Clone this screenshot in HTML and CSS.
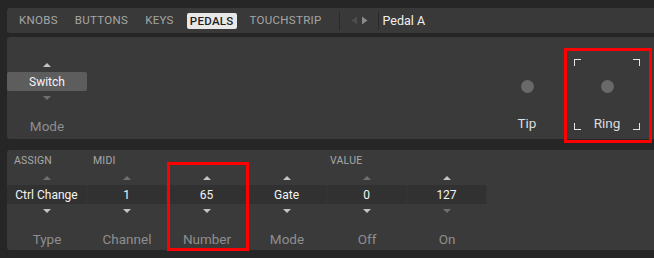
FILE: index.html
```html
<!DOCTYPE html>
<html>
<head>
<meta charset="utf-8">
<link rel="stylesheet" href="styles.css">
</head>
<body>
<div class="app">
  <div class="tabbar">
    <span class="tab">KNOBS</span>
    <span class="tab">BUTTONS</span>
    <span class="tab">KEYS</span>
    <span class="tab active">PEDALS</span>
    <span class="tab">TOUCHSTRIP</span>
    <span class="sep"></span>
    <span class="nav">
      <svg width="7" height="9" viewBox="0 0 7 9"><path d="M6 0.5 L0.5 4.5 L6 8.5 Z" fill="#4d4d4d"/></svg>
      <svg width="7" height="9" viewBox="0 0 7 9"><path d="M1 0.5 L6.5 4.5 L1 8.5 Z" fill="#8a8a8a"/></svg>
    </span>
    <span class="sep"></span>
    <span class="title">Pedal A</span>
  </div>

  <div class="panel top">
    <div class="col">
      <span class="arr up bright"></span>
      <div class="box sel">Switch</div>
      <span class="arr down dim"></span>
      <div class="label">Mode</div>
    </div>
    <div class="spacer"></div>
    <div class="col">
      <span class="dot"></span>
      <div class="label light">Tip</div>
    </div>
    <div class="col ring">
      <span class="dot"></span>
      <div class="label light">Ring</div>
      <span class="corner tl"></span><span class="corner tr"></span>
      <span class="corner bl"></span><span class="corner br"></span>
    </div>
    <div class="hl hl-ring"></div>
  </div>

  <div class="panel bottom">
    <div class="heads">
      <span class="head h-assign">ASSIGN</span>
      <span class="head h-midi">MIDI</span>
      <span class="head"></span>
      <span class="head"></span>
      <span class="head h-value">VALUE</span>
      <span class="head"></span>
    </div>
    <div class="cols">
      <div class="col">
        <span class="arr up dim"></span>
        <div class="box val">Ctrl Change</div>
        <span class="arr down bright"></span>
        <div class="label">Type</div>
      </div>
      <div class="col">
        <span class="arr up dim"></span>
        <div class="box val">1</div>
        <span class="arr down bright"></span>
        <div class="label">Channel</div>
      </div>
      <div class="col">
        <span class="arr up bright"></span>
        <div class="box val">65</div>
        <span class="arr down bright"></span>
        <div class="label">Number</div>
      </div>
      <div class="col">
        <span class="arr up bright"></span>
        <div class="box val">Gate</div>
        <span class="arr down bright"></span>
        <div class="label">Mode</div>
      </div>
      <div class="col">
        <span class="arr up dim"></span>
        <div class="box val">0</div>
        <span class="arr down bright"></span>
        <div class="label">Off</div>
      </div>
      <div class="col">
        <span class="arr up bright"></span>
        <div class="box val">127</div>
        <span class="arr down dim"></span>
        <div class="label">On</div>
      </div>
    </div>
    <div class="hl hl-number"></div>
  </div>
</div>
</body>
</html>
```

FILE: styles.css
```css
* { box-sizing: border-box; }
html, body { margin: 0; padding: 0; }
body {
  background: #262626;
  width: 654px;
  height: 258px;
  overflow: hidden;
  font-family: Roboto, "Liberation Sans", Arial, sans-serif;
}
.app {
  padding: 8px 0 0 7px;
}
.tabbar {
  height: 25px;
  background: #393939;
  border-radius: 3px 0 0 3px;
  display: flex;
  align-items: center;
  padding-left: 12px;
}
.tab {
  font-size: 11.5px;
  color: #a6a6a6;
  margin-right: 17px;
  letter-spacing: 0.3px;
  line-height: 15px;
}
.tab.active {
  background: #e8e8e8;
  color: #1e1e1e;
  padding: 1px 3px 0;
  margin-left: -4px;
  margin-right: 13px;
  border-radius: 2px;
  font-weight: 500;
}
.sep {
  width: 1px;
  height: 19px;
  background: #2a2a2a;
}
.nav {
  display: flex;
  gap: 3px;
  padding: 0 10px 0 11px;
}
.nav svg { display: block; }
.title {
  font-size: 12.5px;
  color: #f0f0f0;
  margin-left: 4px;
}

.panel {
  position: relative;
  background: #3a3a3a;
  border-radius: 3px 0 0 3px;
}
.panel.top {
  margin-top: 4px;
  height: 102px;
  display: flex;
  padding-right: 7px;
}
.panel.bottom {
  margin-top: 11px;
  height: 100px;
}
.spacer { flex: 1; }
.col {
  width: 80px;
  display: flex;
  flex-direction: column;
  align-items: center;
  position: relative;
}
.arr {
  width: 0;
  height: 0;
  border-left: 4px solid transparent;
  border-right: 4px solid transparent;
}
.arr.up {
  margin-top: 26px;
  border-bottom: 4px solid #888;
}
.arr.down {
  margin-top: 5px;
  border-top: 4px solid #888;
}
.arr.up.bright { border-bottom-color: #c4c4c4; }
.arr.up.dim { border-bottom-color: #6e6e6e; }
.arr.down.bright { border-top-color: #c4c4c4; }
.arr.down.dim { border-top-color: #6e6e6e; }
.box {
  margin-top: 5px;
  width: 80px;
  height: 19px;
  display: flex;
  align-items: center;
  justify-content: center;
  font-size: 12px;
  color: #f4f4f4;
}
.box.sel {
  background: #5d5d5d;
  border-radius: 2px;
}
.box.val {
  background: #313131;
  border-right: 1px solid #363636;
  border-radius: 2px;
}
.label {
  margin-top: 18px;
  font-size: 13.5px;
  color: #8e8e8e;
  line-height: 16px;
}
.label.light { color: #dcdcdc; }
.dot {
  margin-top: 43px;
  width: 13px;
  height: 13px;
  border-radius: 50%;
  background: #696969;
}
.col .dot + .label { margin-top: 22px; }

.corner {
  position: absolute;
  width: 7px;
  height: 7px;
  border-color: #e6e6e6;
  border-style: solid;
  border-width: 0;
}
.corner.tl { left: 7px; top: 22px; border-left-width: 1.5px; border-top-width: 1.5px; }
.corner.tr { right: 7px; top: 22px; border-right-width: 1.5px; border-top-width: 1.5px; }
.corner.bl { left: 7px; top: 86px; border-left-width: 1.5px; border-bottom-width: 1.5px; }
.corner.br { right: 7px; top: 86px; border-right-width: 1.5px; border-bottom-width: 1.5px; }

.hl {
  position: absolute;
  border: 3px solid #ff0000;
  pointer-events: none;
}
.hl-ring { left: 557px; top: 11px; width: 88px; height: 95px; }
.hl-number { left: 160px; top: 12px; width: 82px; height: 89px; }

.heads {
  display: grid;
  grid-template-columns: repeat(6, 80px);
  height: 0;
}
.head {
  font-size: 10.5px;
  color: #a8a8a8;
  padding-left: 6px;
  padding-top: 5px;
  letter-spacing: 0.2px;
  line-height: 12px;
}
.h-assign { padding-left: 7px; }
.h-value { padding-left: 3px; }
.cols {
  display: grid;
  grid-template-columns: repeat(6, 80px);
}
```
